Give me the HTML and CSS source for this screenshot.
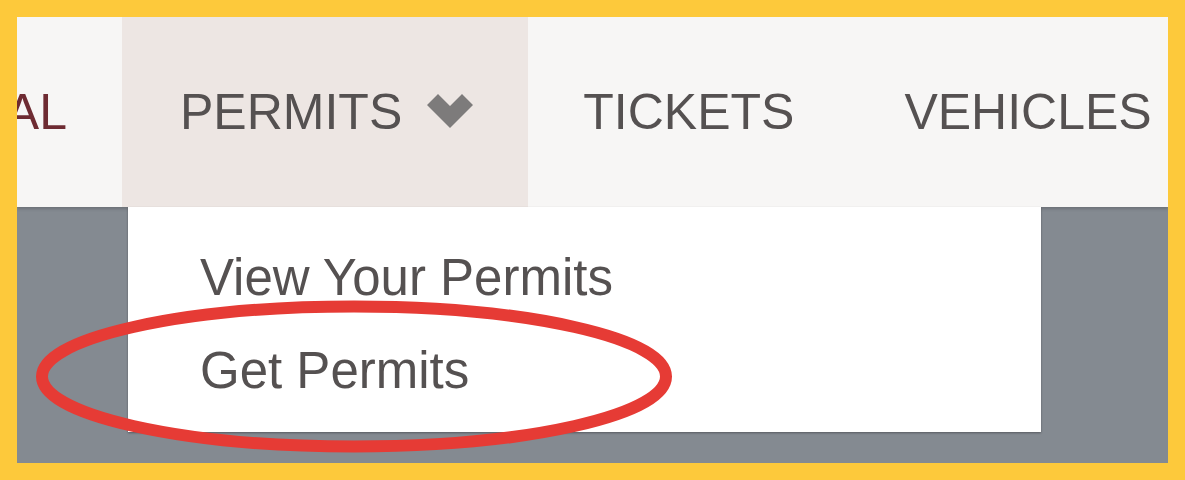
FILE: index.html
```html
<!DOCTYPE html>
<html>
<head>
<meta charset="utf-8">
<link rel="stylesheet" href="styles.css">
</head>
<body>
<div class="frame">
  <div class="screen">
    <nav class="nav">
      <div class="nav-item nav-cut"><span class="cut-text">AL</span></div>
      <div class="nav-item nav-active">
        <span>PERMITS</span>
        <svg class="chev" width="46" height="36" viewBox="0 0 46 36"><polygon points="0,12 11,1 23,13 35,1 46,12 23,35" fill="#7d7b7b"/></svg>
      </div>
      <div class="nav-item">TICKETS</div>
      <div class="nav-item">VEHICLES</div>
    </nav>
    <div class="dropdown">
      <div class="dd-item">View Your Permits</div>
      <div class="dd-item">Get Permits</div>
    </div>
    <svg class="circle" width="1151" height="446" viewBox="0 0 1151 446">
      <ellipse cx="337" cy="359.5" rx="312" ry="70" fill="none" stroke="#e63b35" stroke-width="12"/>
    </svg>
  </div>
</div>
</body>
</html>
```

FILE: styles.css
```css
html, body {
  margin: 0;
  padding: 0;
}
body {
  background: #fdc93b;
  width: 1185px;
  height: 480px;
  overflow: hidden;
}
.frame {
  padding: 17px;
  box-sizing: border-box;
  width: 1185px;
  height: 480px;
}
.screen {
  position: relative;
  width: 1151px;
  height: 446px;
  background: #848a91;
  overflow: hidden;
  font-family: "Liberation Sans", Arial, sans-serif;
}
.nav {
  display: flex;
  height: 190px;
  background: #f7f6f5;
  box-shadow: 0 2px 3px rgba(0, 0, 0, 0.18);
  position: relative;
  overflow: hidden;
}
.nav-item {
  flex: 0 0 auto;
  display: flex;
  align-items: center;
  padding: 0 55px;
  font-size: 50px;
  color: #555151;
  white-space: nowrap;
}
.nav-cut {
  width: 50px;
  padding: 0 55px 0 0;
  justify-content: flex-end;
  overflow: hidden;
  color: #6e2b32;
}
.nav-active {
  background: #ede6e3;
  padding: 0 55px 0 58px;
  gap: 25px;
}
.chev {
  display: block;
  margin-top: -2px;
}
.dropdown {
  position: absolute;
  left: 111px;
  top: 190px;
  width: 913px;
  height: 225px;
  box-sizing: border-box;
  padding: 24px 0 0 72px;
  background: #ffffff;
  box-shadow: 0 1px 2px rgba(0, 0, 0, 0.35);
  z-index: 2;
}
.dd-item {
  font-size: 51px;
  line-height: 93px;
  color: #555151;
  white-space: nowrap;
}
.circle {
  position: absolute;
  left: 0;
  top: 0;
  z-index: 3;
}
```
